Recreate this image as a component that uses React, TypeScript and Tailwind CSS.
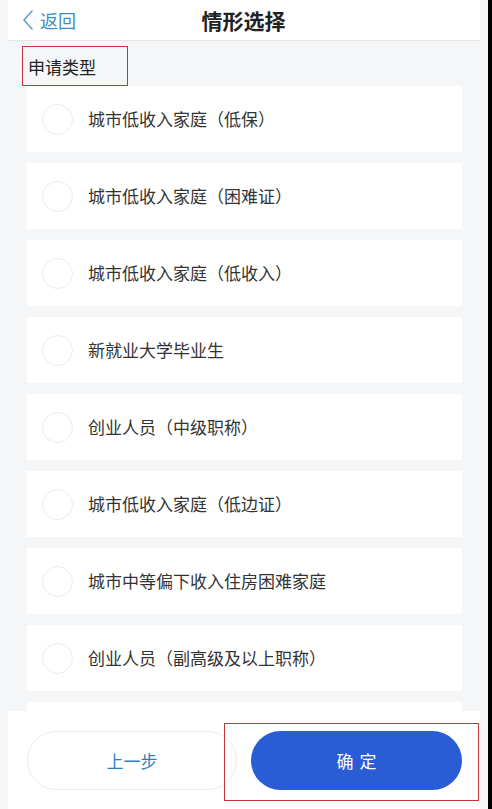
import React from "react";

const items = [
  "城市低收入家庭（低保）",
  "城市低收入家庭（困难证）",
  "城市低收入家庭（低收入）",
  "新就业大学毕业生",
  "创业人员（中级职称）",
  "城市低收入家庭（低边证）",
  "城市中等偏下收入住房困难家庭",
  "创业人员（副高级及以上职称）",
  "",
];

const font = { fontFamily: '"Noto Sans CJK SC", "Noto Sans", sans-serif' };

export default function App() {
  return (
    <div className="w-[492px] h-[809px] flex bg-black overflow-hidden" style={font}>
      <div className="relative w-[488px] h-full bg-[#f5f6f8] overflow-hidden">
        {/* Header */}
        <div className="ml-[8px] w-[472px] h-[41px] bg-white border-b border-[#e6e6e6] relative flex items-center">
          <div className="flex items-center pl-[14px] text-[#3b8ec6]">
            <svg width="12" height="22" viewBox="0 0 12 22" fill="none">
              <path d="M10 2 L2 11 L10 20" stroke="#6e9cc0" strokeWidth="1.6" strokeLinecap="round" strokeLinejoin="round" />
            </svg>
            <span className="ml-[6px] text-[18px] leading-none">返回</span>
          </div>
          <div className="absolute left-0 right-0 top-0 h-full flex items-center justify-center pointer-events-none">
            <span className="text-[21px] font-bold text-[#222] leading-none ml-[-1px]">情形选择</span>
          </div>
        </div>

        {/* Label */}
        <div className="pl-[22px] pt-[5px]">
          <div className="w-[106px] h-[40px] border border-[#c8343a] flex items-center pl-[5px]">
            <span className="text-[17px] text-[#222] leading-none">申请类型</span>
          </div>
        </div>

        {/* List */}
        <div className="pl-[27px] flex flex-col gap-[11px]">
          {items.map((t, i) => (
            <div key={i} className="w-[435px] h-[66px] bg-white flex items-center pl-[15px] shrink-0">
              <div className="w-[31px] h-[31px] rounded-full border border-[#ececec] shrink-0" />
              <span className="ml-[15px] text-[17px] text-[#333] leading-none mt-[-1px]">{t}</span>
            </div>
          ))}
        </div>

        {/* Bottom bar */}
        <div className="absolute left-[8px] bottom-0 w-[472px] h-[98px] bg-white flex items-start">
          <button className="mt-[20px] ml-[19px] w-[210px] h-[59px] rounded-full border border-[#ececec] bg-white flex items-center justify-center text-[17px] text-[#2a80bf]">
            上一步
          </button>
          <div className="ml-[-13px] mt-[12px] w-[255px] h-[78px] border border-[#c8343a] pl-[26px] pt-[7px]">
            <button className="w-[211px] h-[59px] rounded-full bg-[#2a5cd6] flex items-center justify-center text-[17px] text-white tracking-[6px] pl-[6px]">
              确定
            </button>
          </div>
        </div>
      </div>
    </div>
  );
}
